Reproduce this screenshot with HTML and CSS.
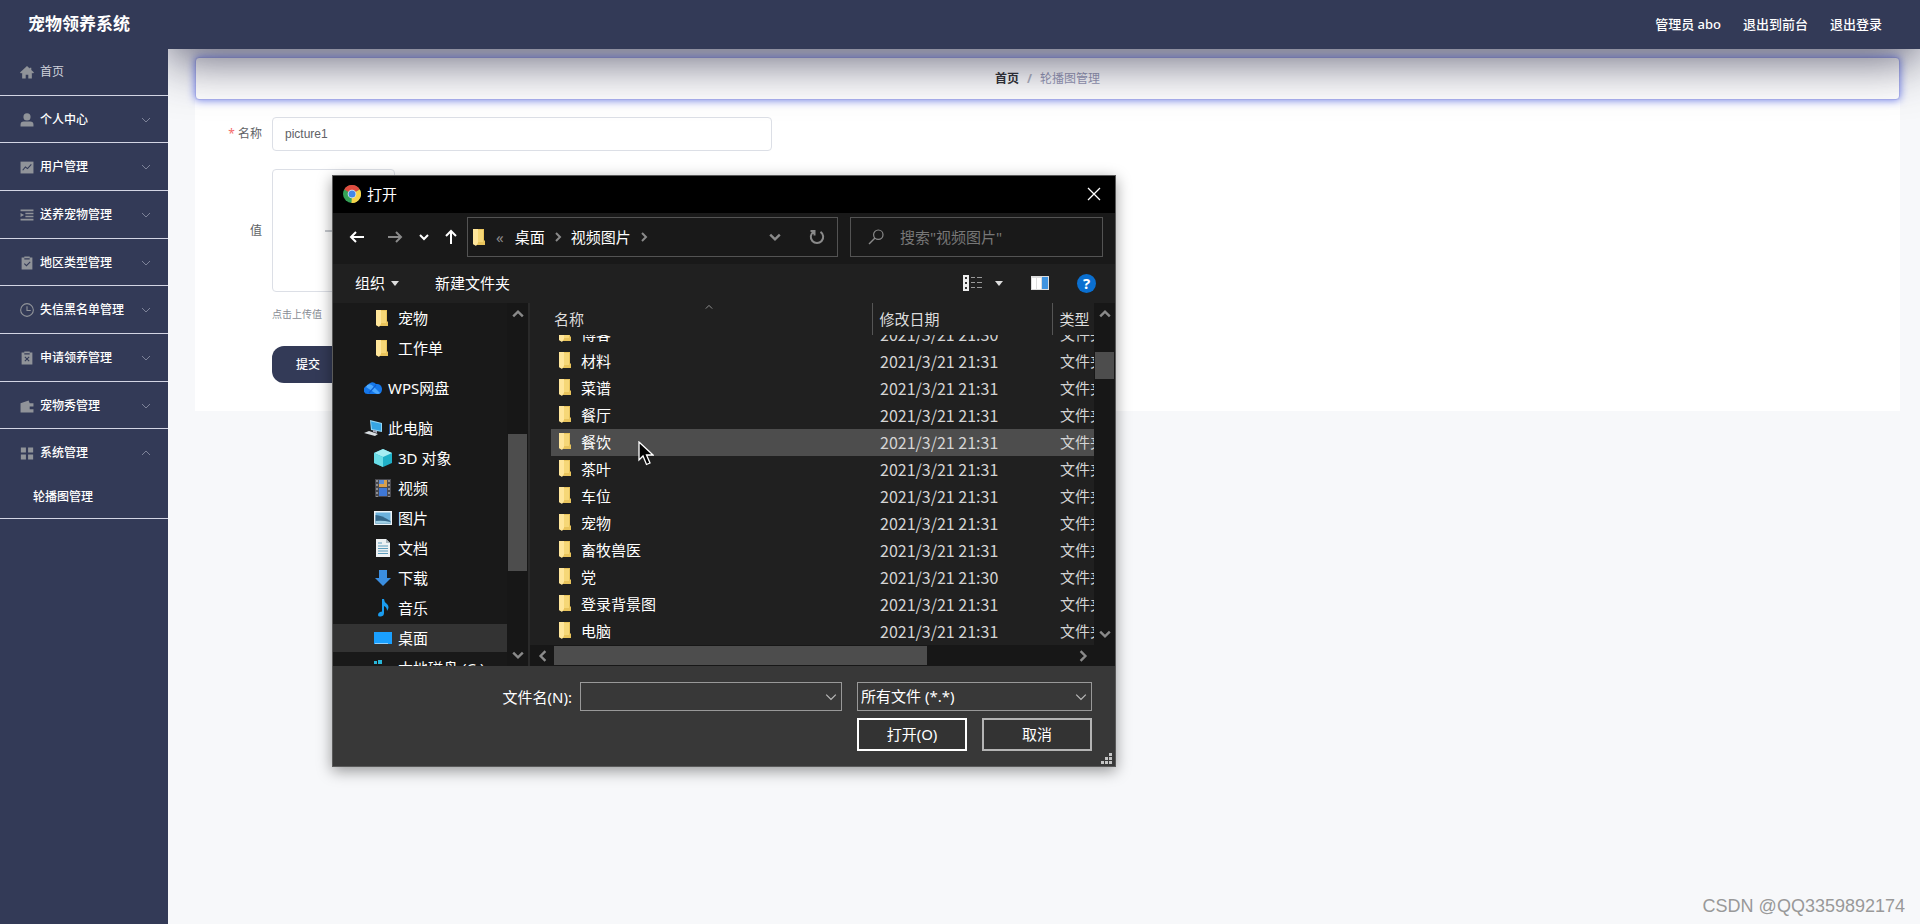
FILE: index.html
```html
<!DOCTYPE html>
<html lang="zh-CN">
<head>
<meta charset="utf-8">
<meta name="viewport" content="width=device-width, initial-scale=1">
<title>宠物领养系统</title>
<link rel="stylesheet" href="styles.css">
</head>
<body>
<svg class="defs" aria-hidden="true">
  <symbol id="chev-down" viewBox="0 0 10 10"><path d="M1 3l4 4 4-4" fill="none" stroke="currentColor"/></symbol>
  <symbol id="chev-up" viewBox="0 0 10 10"><path d="M1 7l4-4 4 4" fill="none" stroke="currentColor"/></symbol>
  <symbol id="bold-down" viewBox="0 0 10 10"><path d="M1 3l4 4 4-4" fill="none" stroke="currentColor" stroke-width="2"/></symbol>
  <symbol id="bold-up" viewBox="0 0 10 10"><path d="M1 7l4-4 4 4" fill="none" stroke="currentColor" stroke-width="2"/></symbol>
  <symbol id="bold-left" viewBox="0 0 10 10"><path d="M7 1L3 5l4 4" fill="none" stroke="currentColor" stroke-width="2"/></symbol>
  <symbol id="bold-right" viewBox="0 0 10 10"><path d="M3 1l4 4-4 4" fill="none" stroke="currentColor" stroke-width="2"/></symbol>
  <symbol id="tri" viewBox="0 0 8 5"><path d="M0 0h8L4 5z" fill="currentColor"/></symbol>
  <symbol id="folder" viewBox="0 0 13 17"><path d="M1 0h11v11l1 1v4H3l-2-1z" fill="#e9c45c"/><path d="M1 0h5v14l-2 3-3-2z" fill="#ffe69b"/><path d="M6 1h5v12H6z" fill="#f6d777"/></symbol>
</svg>

<header class="topbar">
  <h1 class="brand">宠物领养系统</h1>
  <nav class="account">
    <span>管理员 abo</span>
    <a href="#">退出到前台</a>
    <a href="#">退出登录</a>
  </nav>
</header>

<div class="shell">
  <aside class="sidebar">
    <ul class="menu">
      <li class="menu-row home"><a class="menu-link" href="#"><svg class="mi" viewBox="0 0 13 13"><path d="M6.500 1L0 7l1 1 1-.8V12.500h3.300V9h2.400v3.500H11V7.200l1 .8 1-1-2.500-2.300V2.500H9v.8z"/></svg><span>首页</span></a></li>
      <li class="menu-row"><a class="menu-link" href="#"><svg class="mi" viewBox="0 0 13 13"><circle cx="6.500" cy="3.600" r="3.300"/><path d="M.5 12.500V11q0-3 3-3h6q3 0 3 3v1.500z"/></svg><span>个人中心</span><svg class="arrow"><use href="#chev-down"/></svg></a></li>
      <li class="menu-row"><a class="menu-link" href="#"><svg class="mi" viewBox="0 0 13 13"><path d="M.5 1.500h12v11H.5z"/><path class="cut" d="M2.500 9.500L5 6.500l2 1.500 3.500-4"/></svg><span>用户管理</span><svg class="arrow"><use href="#chev-down"/></svg></a></li>
      <li class="menu-row"><a class="menu-link" href="#"><svg class="mi" viewBox="0 0 13 13"><path d="M.5 1.500h12V3H.5zM5 4.400h7.500v1.500H5zM5 7.200h7.500v1.500H5zM.5 4.700l3.300 1.800L.5 8.300zM.5 10h12v1.500H.5z"/></svg><span>送养宠物管理</span><svg class="arrow"><use href="#chev-down"/></svg></a></li>
      <li class="menu-row"><a class="menu-link" href="#"><svg class="mi" viewBox="0 0 13 13"><path d="M1.500 1.500H4V.5h5v1h2.500v11h-10z"/><path class="cut" d="M4 2.700h5M4 7l2 2 3.500-3.500"/></svg><span>地区类型管理</span><svg class="arrow"><use href="#chev-down"/></svg></a></li>
      <li class="menu-row"><a class="menu-link" href="#"><svg class="mi" viewBox="0 0 13 13"><circle class="line" cx="6.500" cy="6.500" r="5.900"/><path class="line" d="M6.500 3v4H10"/></svg><span>失信黑名单管理</span><svg class="arrow"><use href="#chev-down"/></svg></a></li>
      <li class="menu-row"><a class="menu-link" href="#"><svg class="mi" viewBox="0 0 13 13"><path d="M1.500 1.500H4V.5h5v1h2.500v11h-10z"/><path class="cut" d="M4 2.700h5M4.500 5.500l4 4M8.500 5.500l-4 4"/></svg><span>申请领养管理</span><svg class="arrow"><use href="#chev-down"/></svg></a></li>
      <li class="menu-row"><a class="menu-link" href="#"><svg class="mi" viewBox="0 0 13 13"><path d="M.5 4L8 1.500 9 4h3.500v3H9v2.500h3.500v3H.5z"/></svg><span>宠物秀管理</span><svg class="arrow"><use href="#chev-down"/></svg></a></li>
      <li class="menu-row open"><a class="menu-link" href="#"><svg class="mi" viewBox="0 0 13 13"><path d="M.8 1.300h4.700V6H.8zM7.500 1.300h4.700V6H7.500zM.8 7.800h4.700v4.700H.8zM7.500 7.800h4.700v4.700H7.500z"/></svg><span>系统管理</span><svg class="arrow"><use href="#chev-up"/></svg></a>
        <a class="submenu-link" href="#">轮播图管理</a></li>
    </ul>
  </aside>

  <main class="content">
    <nav class="crumbs"><a href="#">首页</a><span class="sep">/</span><span class="here">轮播图管理</span></nav>
    <form class="card">
      <div class="field"><label class="label" for="name"><span class="req">*</span> 名称</label><input class="text-input" id="name" type="text" value="picture1"></div>
      <div class="field"><label class="label" for="upload">值</label>
        <button class="upload" id="upload" type="button" aria-label="点击上传值"><svg class="plus" viewBox="0 0 20 20"><path d="M10 1v18M1 10h18" stroke="#8c939d" fill="none"/></svg></button></div>
      <p class="hint">点击上传值</p>
      <button class="submit" type="button">提交</button>
    </form>
  </main>
</div>

<section class="dialog" role="dialog" aria-label="打开">
  <div class="titlebar">
    <svg class="chrome" viewBox="0 0 18 18"><circle cx="9" cy="9" r="9" fill="#35a257"/><path d="M9 9L1.200 4.500A9 9 0 0 1 16.800 4.500z" fill="#df4c3f"/><path d="M9 9l7.800-4.500A9 9 0 0 1 8.500 18z" fill="#f7d34a"/><circle cx="9" cy="9" r="4.300" fill="#e8f0ee"/><circle cx="9" cy="9" r="3.500" fill="#4387e8"/></svg>
    <h2 class="dialog-title">打开</h2>
    <button class="bare close" aria-label="关闭"><svg class="i14" viewBox="0 0 14 14"><path d="M1 1l12 12M13 1L1 13" stroke="#fff" stroke-width="1.300"/></svg></button>
  </div>

  <div class="navbar">
    <div class="history">
      <button class="bare" aria-label="后退"><svg class="i16" viewBox="0 0 16 16"><path d="M15 8H2M7 3L2 8l5 5" fill="none" stroke="#fff" stroke-width="2"/></svg></button>
      <button class="bare forward" aria-label="前进"><svg class="i16" viewBox="0 0 16 16"><path d="M1 8h13M9 3l5 5-5 5" fill="none" stroke="#8a8a8a" stroke-width="2"/></svg></button>
      <button class="bare" aria-label="最近浏览"><svg class="i10"><use href="#bold-down"/></svg></button>
      <button class="bare" aria-label="上一级"><svg class="i16" viewBox="0 0 16 16"><path d="M8 15V2M3 7l5-5 5 5" fill="none" stroke="#fff" stroke-width="2"/></svg></button>
    </div>
    <div class="address">
      <svg class="folder"><use href="#folder"/></svg>
      <span class="dim laquo">«</span>
      <span>桌面</span>
      <svg class="i10 dim"><use href="#bold-right"/></svg>
      <span>视频图片</span>
      <svg class="i10 dim"><use href="#bold-right"/></svg>
      <span class="address-tools">
        <button class="bare dim" aria-label="展开"><svg class="i12"><use href="#bold-down"/></svg></button>
        <button class="bare dim" aria-label="刷新"><svg class="i16" viewBox="0 0 16 16"><path d="M11.500 2.800A6.200 6.200 0 1 1 4.500 2.800M1.500 2h4v4.500" fill="none" stroke="currentColor" stroke-width="2"/></svg></button>
      </span>
    </div>
    <label class="search"><svg class="i16" viewBox="0 0 16 16"><circle cx="10.300" cy="5.700" r="4.700" fill="none" stroke="#8a8a8a" stroke-width="1.200"/><path d="M7 9L1 15" stroke="#8a8a8a" stroke-width="1.400"/></svg><input class="search-input" type="text" placeholder='搜索"视频图片"' aria-label="搜索"></label>
  </div>

  <div class="toolbar">
    <button class="bare">组织 <svg class="tri"><use href="#tri"/></svg></button>
    <button class="bare">新建文件夹</button>
    <div class="view-tools">
      <button class="bare view" aria-label="视图"><svg class="list-icon" viewBox="0 0 19 16"><path d="M0 0h6v16H0z" fill="#eee"/><path d="M2 2h2v2H2zM2 7h2v2H2zM2 12h2v2H2z" fill="#333"/><path d="M8 2.500h4M14 2.500h5M8 7.500h4M14 7.500h5M8 12.500h4M14 12.500h5" stroke="#999"/></svg><svg class="tri"><use href="#tri"/></svg></button>
      <button class="bare" aria-label="预览窗格"><svg class="pane-icon" viewBox="0 0 18 14"><path d="M0 0h18v14H0z" fill="#ddd"/><path d="M1 2h4v11H1zM6 2h4v11H6z" fill="#fff"/><path d="M11 1h6v12h-6z" fill="#3f93df"/></svg></button>
      <button class="help" aria-label="帮助">?</button>
    </div>
  </div>

  <div class="browser">
    <div class="tree">
      <ul class="places">
        <li class="deep"><svg class="folder"><use href="#folder"/></svg>宠物</li>
        <li class="deep"><svg class="folder"><use href="#folder"/></svg>工作单</li>
        <li class="root"><svg class="pi" viewBox="0 0 18 18"><path d="M4 15a4 4 0 0 1-.5-8A5 5 0 0 1 12 5a5 5 0 0 1 6 5q0 5-4 5z" fill="#1577ea"/><path d="M3 6q3-2 6 1l7 7q-2 2-5 0L2 8z" fill="#4aa8ff"/><path d="M12 6L5 14" stroke="#0f5fd0" stroke-width="1.200"/></svg>WPS网盘</li>
        <li class="root"><svg class="pi" viewBox="0 0 18 18"><path d="M6 1l12 3v9L7 11z" fill="#93d5f5"/><path d="M7 2.500l10 2.300v7L8 10z" fill="#36a5e4"/><path d="M0 14l5-2 9 3-3 2z" fill="#d9dee2"/><path d="M9 11l4 1v2l-4-1z" fill="#aab"/></svg>此电脑</li>
        <li><svg class="pi" viewBox="0 0 18 18"><path d="M9 0l9 4v10l-9 4-9-4V4z" fill="#1fb0c8"/><path d="M9 0l9 4-9 4-9-4z" fill="#a5edf3"/><path d="M0 4l9 4v10l-9-4z" fill="#69dce6"/></svg>3D 对象</li>
        <li><svg class="pi" viewBox="0 0 18 18"><path d="M1 0h16v18H1z" fill="#4a4a50"/><path d="M5 1h8v7H5z" fill="#d9a04b"/><path d="M5 1h5v4H5z" fill="#5b8bd4"/><path d="M5 9h8v8H5z" fill="#3f78d6"/><path d="M3 1v17M15 1v17" stroke="#a8a8a8" stroke-width="1.500" stroke-dasharray="2 2"/></svg>视频</li>
        <li><svg class="pi" viewBox="0 0 18 18"><path d="M0 2h18v14H0z" fill="#eef3f6"/><path d="M1.500 3.500h15v11h-15z" fill="#6cb2dd"/><path d="M1.500 6q6 0 15 6v2.500h-15z" fill="#35688a"/><path d="M1.500 12q7-1 15 1v1.500h-15z" fill="#9fd0e6"/></svg>图片</li>
        <li><svg class="pi" viewBox="0 0 18 18"><path d="M2 0h10l4 4v14H2z" fill="#edf1f3"/><path d="M4 4h4M4 7h10M4 9.500h10M4 12h10M4 14.500h10" stroke="#5c9dbd"/><path d="M12 0v4h4z" fill="#a9b5bc"/></svg>文档</li>
        <li><svg class="pi" viewBox="0 0 18 18"><path d="M5 1h8v8h4l-8 8-8-8h4z" fill="#3b8ee0"/></svg>下载</li>
        <li><svg class="pi" viewBox="0 0 18 18"><path d="M8 0h2q0 3 3 5 3 3 0 7 0-4-3-5v7q0 3-3 3.500T4 16t2-3l2-.5z" fill="#1a9df0"/></svg>音乐</li>
        <li class="selected"><svg class="pi" viewBox="0 0 18 18"><path d="M0 3h18v12H0z" fill="#1aa0ff"/><path d="M1 14h13v1H1z" fill="#8fd0ff"/></svg>桌面</li>
        <li><svg class="pi" viewBox="0 0 18 18"><path d="M0 2h3v3H0zM4 1h4v4H4z" fill="#28b6d8"/><path d="M0 8h18v6H0z" fill="#aaa"/></svg>本地磁盘 (C:)</li>
      </ul>
      <div class="vscroll tree-scroll"><svg class="i12"><use href="#bold-up"/></svg><div class="thumb"></div><svg class="i12"><use href="#bold-down"/></svg></div>
    </div>
    <div class="files">
      <div class="list">
        <svg class="sort"><use href="#chev-up"/></svg>
        <table class="file-table">
          <colgroup><col class="c-name"><col class="c-date"><col class="c-type"></colgroup>
          <thead><tr><th scope="col">名称</th><th scope="col">修改日期</th><th scope="col">类型</th></tr></thead>
          <tbody>
            <tr class="cut-row"><td><div class="cell"><svg class="folder"><use href="#folder"/></svg>博客</div></td><td><div class="cell">2021/3/21 21:30</div></td><td><div class="cell">文件夹</div></td></tr>
            <tr><td><div class="cell"><svg class="folder"><use href="#folder"/></svg>材料</div></td><td><div class="cell">2021/3/21 21:31</div></td><td><div class="cell">文件夹</div></td></tr>
            <tr><td><div class="cell"><svg class="folder"><use href="#folder"/></svg>菜谱</div></td><td><div class="cell">2021/3/21 21:31</div></td><td><div class="cell">文件夹</div></td></tr>
            <tr><td><div class="cell"><svg class="folder"><use href="#folder"/></svg>餐厅</div></td><td><div class="cell">2021/3/21 21:31</div></td><td><div class="cell">文件夹</div></td></tr>
            <tr class="hover"><td><div class="cell"><svg class="folder"><use href="#folder"/></svg>餐饮</div></td><td><div class="cell">2021/3/21 21:31</div></td><td><div class="cell">文件夹</div></td></tr>
            <tr><td><div class="cell"><svg class="folder"><use href="#folder"/></svg>茶叶</div></td><td><div class="cell">2021/3/21 21:31</div></td><td><div class="cell">文件夹</div></td></tr>
            <tr><td><div class="cell"><svg class="folder"><use href="#folder"/></svg>车位</div></td><td><div class="cell">2021/3/21 21:31</div></td><td><div class="cell">文件夹</div></td></tr>
            <tr><td><div class="cell"><svg class="folder"><use href="#folder"/></svg>宠物</div></td><td><div class="cell">2021/3/21 21:31</div></td><td><div class="cell">文件夹</div></td></tr>
            <tr><td><div class="cell"><svg class="folder"><use href="#folder"/></svg>畜牧兽医</div></td><td><div class="cell">2021/3/21 21:31</div></td><td><div class="cell">文件夹</div></td></tr>
            <tr><td><div class="cell"><svg class="folder"><use href="#folder"/></svg>党</div></td><td><div class="cell">2021/3/21 21:30</div></td><td><div class="cell">文件夹</div></td></tr>
            <tr><td><div class="cell"><svg class="folder"><use href="#folder"/></svg>登录背景图</div></td><td><div class="cell">2021/3/21 21:31</div></td><td><div class="cell">文件夹</div></td></tr>
            <tr><td><div class="cell"><svg class="folder"><use href="#folder"/></svg>电脑</div></td><td><div class="cell">2021/3/21 21:31</div></td><td><div class="cell">文件夹</div></td></tr>
          </tbody>
        </table>
        <div class="vscroll list-scroll"><svg class="i12"><use href="#bold-up"/></svg><div class="thumb"></div><svg class="i12"><use href="#bold-down"/></svg></div>
      </div>
      <div class="hscroll"><svg class="i12"><use href="#bold-left"/></svg><div class="track"><div class="hthumb"></div></div><svg class="i12"><use href="#bold-right"/></svg></div>
    </div>
  </div>

  <div class="footer">
    <label class="file-label" for="filename">文件名(N):</label>
    <div class="combo"><input class="combo-field" id="filename" type="text"><svg class="combo-arrow"><use href="#chev-down"/></svg></div>
    <div class="combo"><select class="combo-field" aria-label="文件类型"><option>所有文件 (*.*)</option></select><svg class="combo-arrow"><use href="#chev-down"/></svg></div>
    <div class="actions"><button class="btn primary">打开(O)</button><button class="btn">取消</button></div>
  </div>
  <svg class="grip" viewBox="0 0 11 11"><path d="M8 0h3v3H8zM4 4h3v3H4zM8 4h3v3H8zM0 8h3v3H0zM4 8h3v3H4zM8 8h3v3H8z" fill="#c4c4c4"/></svg>
  <svg class="cursor" viewBox="0 0 16 25"><path d="M1 1v18l4-4 3.500 8.500 3.500-1.500L8.500 14H15z" fill="#000" stroke="#fff" stroke-width="1.300"/></svg>
</section>

<div class="watermark">CSDN @QQ3359892174</div>
</body>
</html>
```

FILE: styles.css
```css
* { box-sizing: border-box; }

body {
  margin: 0;
  min-height: 100vh;
  display: flex;
  flex-direction: column;
  position: relative;
  overflow: hidden;
  background: #f7f8fa;
  color: #606266;
  font: 12px/20px "Noto Sans", "Noto Sans CJK SC", sans-serif;
}

a { color: inherit; text-decoration: none; }
ul { margin: 0; padding: 0; list-style: none; }
button, input, select { font: inherit; color: inherit; }
.defs { position: absolute; width: 0; height: 0; }

/* Top bar */
.topbar {
  position: relative;
  z-index: 2;
  display: flex;
  align-items: center;
  justify-content: space-between;
  height: 49px;
  padding: 0 38px 2px 28px;
  background: #333a57;
  color: #fff;
}
.brand { margin: 0; font-size: 17px; line-height: 24px; font-weight: 700; }
.account { display: flex; gap: 22px; font-size: 13px; font-weight: 500; }

/* Side menu */
.shell { flex: 1; display: flex; }
.sidebar {
  position: relative;
  z-index: 2;
  flex: 0 0 168px;
  background: #333a57;
  color: #fff;
  font-weight: 500;
}
.menu-row { height: 48px; border-bottom: 1px solid #d3d5e4; }
.menu-row:nth-child(3n+2), .home { height: 47px; }
.home { color: #d0d2dc; font-weight: 400; }
.menu-link { display: flex; align-items: center; gap: 6px; height: 47px; padding: 0 17px 0 20px; }
.home .menu-link { height: 46px; }
.mi { width: 14px; height: 14px; fill: #909399; }
.mi .cut { fill: none; stroke: #333a57; }
.mi .line { fill: none; stroke: #909399; }
.arrow { width: 10px; height: 10px; margin-left: auto; color: #7d8298; }
.menu-row.open { height: auto; }
.open .menu-link { height: 48px; }
.submenu-link { display: block; height: 41px; padding-left: 33px; line-height: 40px; }

/* Page content */
.content {
  position: relative;
  flex: 1;
  padding: 8px 20px 0 27px;
}
.content::before {
  content: "";
  position: absolute;
  z-index: 1;
  top: -100px;
  left: 0;
  right: 0;
  height: 100px;
  box-shadow: 0 12px 50px rgba(30, 30, 60, .7);
  pointer-events: none;
}
.crumbs {
  position: relative;
  display: flex;
  align-items: center;
  justify-content: center;
  gap: 8px;
  height: 43px;
  border: 1px solid #a9b0ee;
  border-radius: 4px;
  background: #fff;
  box-shadow: 0 0 8px #6f7ff0;
  color: #303133;
}
.crumbs a { font-weight: 700; }
.sep { color: #b0b3bf; font-weight: 700; }
.here { color: #9799b5; }
.card { padding: 17px 0 28px; background: #fff; }
.field { display: flex; align-items: center; margin-bottom: 18px; }
.label { width: 77px; padding-right: 10px; text-align: right; }
.req { color: #f56c6c; }
.text-input {
  width: 500px;
  height: 34px;
  padding: 0 12px;
  border: 1px solid #dcdfe6;
  border-radius: 4px;
  background: #fff;
  font-family: "Liberation Sans", sans-serif;
}
.upload {
  display: grid;
  place-items: center;
  width: 123px;
  height: 123px;
  border: 1px solid #dcdfe6;
  border-radius: 4px;
  background: #fff;
}
.plus { width: 20px; height: 20px; }
.hint { margin: -6px 0 22px 77px; font-size: 10px; line-height: 20px; color: #888c94; }
.submit {
  width: 110px;
  height: 37px;
  margin-left: 77px;
  padding: 0 24px;
  border: 0;
  border-radius: 12px;
  background: #333a57;
  color: #fff;
  font-weight: 500;
  text-align: left;
}

/* File dialog window */
.dialog {
  position: absolute;
  z-index: 3;
  left: 332px;
  top: 175px;
  width: 784px;
  border: 1px solid #5a5a5a;
  background: #383838;
  box-shadow: 0 4px 14px rgba(0, 0, 0, .4);
  color: #fff;
  font-size: 15px;
  line-height: 20px;
}
.bare { display: flex; align-items: center; padding: 0; border: 0; background: none; }
.i10 { width: 10px; height: 10px; }
.i12 { width: 12px; height: 12px; }
.i14 { width: 14px; height: 14px; }
.i16 { width: 16px; height: 16px; }
.dim { color: #8a8a8a; }
.folder { flex: none; width: 13px; height: 17px; }

.titlebar { display: flex; align-items: center; gap: 6px; height: 37px; padding: 0 14px 2px 10px; background: #000; }
.chrome { width: 18px; height: 18px; }
.dialog-title { margin: 0; font-size: 15px; font-weight: 400; }
.close { margin-left: auto; }

.navbar { display: flex; align-items: center; gap: 12px; height: 51px; padding: 0 12px 3px 16px; background: #191919; }
.history { display: flex; align-items: center; justify-content: space-between; width: 110px; margin-right: -4px; }
.forward { margin: 0 2px 0 8px; }
.address {
  flex: 1;
  display: flex;
  align-items: center;
  gap: 8px;
  height: 40px;
  padding: 0 12px 0 4px;
  border: 1px solid #535353;
}
.laquo { margin: 0 3px; }
.address-tools { display: flex; gap: 28px; margin-left: auto; }
.search {
  display: flex;
  align-items: center;
  gap: 16px;
  width: 253px;
  height: 40px;
  padding-left: 17px;
  border: 1px solid #535353;
}
.search-input { width: 180px; padding: 0; border: 0; background: none; outline: 0; }
.search-input::placeholder { color: #777; opacity: 1; }

.toolbar { display: flex; align-items: center; gap: 36px; height: 39px; padding: 0 19px 1px 22px; background: #202020; }
.tri { width: 8px; height: 5px; margin-left: 6px; color: #ddd; }
.view-tools { display: flex; align-items: center; gap: 28px; margin-left: auto; }
.view .tri { margin-left: 13px; }
.list-icon { width: 19px; height: 16px; }
.pane-icon { width: 18px; height: 14px; }
.help {
  width: 19px;
  height: 19px;
  padding: 0;
  border: 0;
  border-radius: 50%;
  background: #0a6fd0;
  font-weight: 700;
  line-height: 19px;
}

.browser { display: flex; height: 363px; overflow: hidden; background: #202020; }
.tree { display: flex; width: 197px; border-right: 2px solid #2a2a2a; background: #191919; }
.places { flex: 1; }
.places li { display: flex; align-items: center; gap: 6px; height: 30px; padding-left: 41px; white-space: nowrap; }
.places .deep { padding-left: 42px; gap: 10px; }
.places .root { margin: 10px 0; padding-left: 31px; }
.places .root + .root { margin-bottom: 0; }
.places .selected { height: 28px; margin: 1px 0; background: #333; }
.pi { flex: none; width: 18px; height: 18px; }

.vscroll { display: flex; flex-direction: column; align-items: center; width: 21px; padding: 5px 0; background: #171717; color: #8a8a8a; }
.thumb { width: 19px; background: #4d4d4d; }
.vscroll svg:last-child { margin-top: auto; }
.tree-scroll .thumb { height: 137px; margin-top: 114px; }
.list-scroll .thumb { height: 27px; margin-top: 32px; }

.files { flex: 1; min-width: 0; display: flex; flex-direction: column; }
.list { position: relative; display: flex; height: 342px; padding-left: 21px; }
.sort { position: absolute; left: 174px; top: 0; width: 10px; height: 8px; color: #aaa; }
.file-table { flex: 1; width: 0; table-layout: fixed; border-collapse: collapse; }
.c-name { width: 321px; }
.c-date { width: 180px; }
th, td { padding: 0; overflow: hidden; }
th { height: 32px; padding-left: 7px; border-left: 1px solid #555; font-weight: 400; text-align: left; color: #ddd; white-space: nowrap; }
th:first-child { padding-left: 3px; border-left: 0; }
.cell { display: flex; align-items: flex-end; gap: 10px; height: 27px; padding-left: 8px; overflow: hidden; line-height: 27px; white-space: nowrap; }
td:first-child .cell { padding-left: 7px; }
.cell .folder { margin-bottom: 6px; }
td:nth-child(2) .cell { font-family: "Noto Sans CJK SC", sans-serif; font-size: 16px; line-height: 26px; padding-bottom: 1px; color: #d4d4d4; }
td:nth-child(3) .cell { color: #d4d4d4; }
.cut-row .cell { height: 13px; }
.hover { background: #4d4d4d; }
.hscroll { display: flex; align-items: center; height: 21px; padding: 0 26px 0 7px; background: #171717; color: #8a8a8a; }
.track { flex: 1; margin: 0 5px; }
.hthumb { width: 72%; height: 19px; background: #4d4d4d; }

.footer {
  display: grid;
  grid-template-columns: 1fr 262px 235px;
  gap: 7px 15px;
  align-items: center;
  padding: 16px 23px 15px 0;
}
.file-label { margin-right: -7px; text-align: right; }
.combo { position: relative; height: 29px; border: 1px solid #999; background: #383838; }
.combo-field { display: block; width: 100%; height: 100%; padding: 0 3px 1px; border: 0; background: none; appearance: none; outline: 0; }
.combo-arrow { position: absolute; right: 4px; top: 8px; width: 12px; height: 12px; color: #bbb; pointer-events: none; }
.actions { grid-column: 3; display: grid; grid-template-columns: 1fr 1fr; gap: 15px; }
.btn { height: 33px; padding: 0 0 1px; border: 2px solid #b4b4b4; background: #333; }
.btn.primary { border-color: #fff; }
.grip { position: absolute; right: 3px; bottom: 2px; width: 11px; height: 11px; }
.cursor { position: absolute; left: 305px; top: 265px; width: 16px; height: 25px; }

.watermark {
  position: absolute;
  right: 15px;
  bottom: 8px;
  color: #999;
  font: 18px/20px "Liberation Sans", sans-serif;
}
```
